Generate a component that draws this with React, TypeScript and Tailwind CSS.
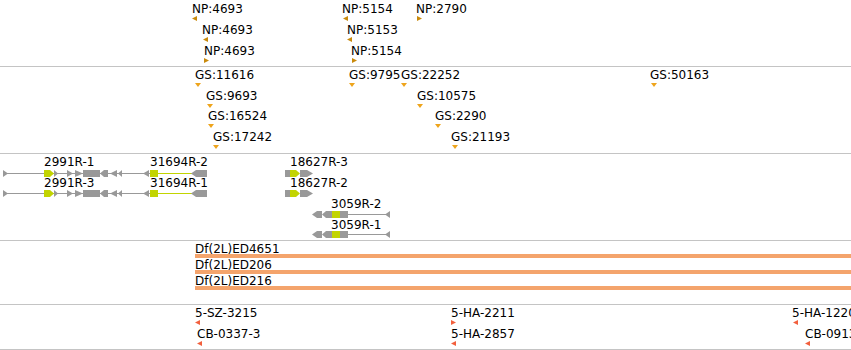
import React from "react";

const txt =
  "absolute whitespace-nowrap font-['DejaVu_Sans',sans-serif] text-[12px] leading-[14px] text-black";

type Dir = "l" | "r" | "d";

function Mk({ c, d, color }: { c: string; d: Dir; color: string }) {
  const w = d === "d" ? 6 : 5;
  const h = d === "d" ? 4 : 5;
  const pts = d === "l" ? "5,0 0,2.5 5,5" : d === "r" ? "0,0 5,2.5 0,5" : "0,0 6,0 3,4";
  return (
    <svg className={"absolute " + c} width={w} height={h} viewBox={`0 0 ${w} ${h}`}>
      <polygon points={pts} fill={color} />
    </svg>
  );
}

type Item = { t: string; tc: string; mc: string; d: Dir };

const np: Item[] = [
  { t: "NP:4693", tc: "left-[192px] top-[2px]", mc: "left-[192px] top-[16px]", d: "l" },
  { t: "NP:4693", tc: "left-[202px] top-[23px]", mc: "left-[203px] top-[37px]", d: "l" },
  { t: "NP:4693", tc: "left-[204px] top-[44px]", mc: "left-[204px] top-[58px]", d: "r" },
  { t: "NP:5154", tc: "left-[342px] top-[2px]", mc: "left-[343px] top-[16px]", d: "l" },
  { t: "NP:5153", tc: "left-[347px] top-[23px]", mc: "left-[347px] top-[37px]", d: "l" },
  { t: "NP:5154", tc: "left-[351px] top-[44px]", mc: "left-[352px] top-[58px]", d: "r" },
  { t: "NP:2790", tc: "left-[416px] top-[2px]", mc: "left-[417px] top-[16px]", d: "r" },
];

const gs: Item[] = [
  { t: "GS:11616", tc: "left-[195px] top-[1px]", mc: "left-[195px] top-[16px]", d: "d" },
  { t: "GS:9693", tc: "left-[206px] top-[22px]", mc: "left-[207px] top-[37px]", d: "d" },
  { t: "GS:16524", tc: "left-[208px] top-[42px]", mc: "left-[208px] top-[57px]", d: "d" },
  { t: "GS:17242", tc: "left-[213px] top-[63px]", mc: "left-[213px] top-[78px]", d: "d" },
  { t: "GS:9795", tc: "left-[349px] top-[1px]", mc: "left-[349px] top-[16px]", d: "d" },
  { t: "GS:22252", tc: "left-[401px] top-[1px]", mc: "left-[401px] top-[16px]", d: "d" },
  { t: "GS:10575", tc: "left-[417px] top-[22px]", mc: "left-[417px] top-[37px]", d: "d" },
  { t: "GS:2290", tc: "left-[435px] top-[42px]", mc: "left-[435px] top-[57px]", d: "d" },
  { t: "GS:21193", tc: "left-[451px] top-[63px]", mc: "left-[452px] top-[78px]", d: "d" },
  { t: "GS:50163", tc: "left-[650px] top-[1px]", mc: "left-[651px] top-[16px]", d: "d" },
];

const ins: Item[] = [
  { t: "5-SZ-3215", tc: "left-[195px] top-[1px]", mc: "left-[195px] top-[15px]", d: "l" },
  { t: "CB-0337-3", tc: "left-[197px] top-[22px]", mc: "left-[197px] top-[36px]", d: "l" },
  { t: "5-HA-2211", tc: "left-[451px] top-[1px]", mc: "left-[451px] top-[15px]", d: "r" },
  { t: "5-HA-2857", tc: "left-[451px] top-[22px]", mc: "left-[451px] top-[36px]", d: "l" },
  { t: "5-HA-1220", tc: "left-[792px] top-[1px]", mc: "left-[793px] top-[15px]", d: "l" },
  { t: "CB-0913-1", tc: "left-[805px] top-[22px]", mc: "left-[805px] top-[36px]", d: "l" },
];

const labels = [
  { t: "2991R-1", c: "left-[44px] top-[1px]" },
  { t: "2991R-3", c: "left-[44px] top-[22px]" },
  { t: "31694R-2", c: "left-[150px] top-[1px]" },
  { t: "31694R-1", c: "left-[150px] top-[22px]" },
  { t: "18627R-3", c: "left-[290px] top-[1px]" },
  { t: "18627R-2", c: "left-[290px] top-[22px]" },
  { t: "3059R-2", c: "left-[331px] top-[43px]" },
  { t: "3059R-1", c: "left-[331px] top-[64px]" },
];

const dfs = ["Df(2L)ED4651", "Df(2L)ED206", "Df(2L)ED216"];

const G = "#999999";
const Y = "#c2d400";

function Box(x0: number, x1: number, c: number, f: string) {
  return <rect x={x0} y={c - 3} width={x1 - x0} height={7} fill={f} />;
}
function Ln(x0: number, x1: number, c: number, f: string) {
  return <rect x={x0} y={c} width={x1 - x0} height={1} fill={f} />;
}
function TR(x0: number, x1: number, c: number, f: string) {
  return <polygon points={`${x0},${c - 3} ${x1},${c + 0.5} ${x0},${c + 4}`} fill={f} />;
}
function TL(x0: number, x1: number, c: number, f: string) {
  return <polygon points={`${x1},${c - 3} ${x0},${c + 0.5} ${x1},${c + 4}`} fill={f} />;
}
function PR(x0: number, xb: number, x1: number, c: number, f: string) {
  return (
    <polygon
      points={`${x0},${c - 3} ${xb},${c - 3} ${x1},${c + 0.5} ${xb},${c + 4} ${x0},${c + 4}`}
      fill={f}
    />
  );
}
function PL(x0: number, xb: number, x1: number, c: number, f: string) {
  return (
    <polygon
      points={`${x0},${c + 0.5} ${xb},${c - 3} ${x1},${c - 3} ${x1},${c + 4} ${xb},${c + 4}`}
      fill={f}
    />
  );
}

function GeneRowA({ c }: { c: number }) {
  return (
    <g>
      {Ln(4, 150, c, G)}
      {Ln(158, 192, c, Y)}
      {TR(3, 8, c, G)}
      {PR(44, 50, 54, c, Y)}
      {TR(54, 58, c, G)}
      {TR(67, 73, c, G)}
      {TR(75, 83, c, G)}
      {Box(83, 100, c, G)}
      {PL(100, 104, 108, c, G)}
      {TL(110, 117, c, G)}
      {TL(118, 122, c, G)}
      {TL(143, 149, c, G)}
      {Box(150, 158, c, Y)}
      {PL(191, 196, 207, c, G)}
      {Box(285, 290, c, G)}
      {PR(290, 296, 300, c, Y)}
      {PR(300, 307, 313, c, G)}
    </g>
  );
}

function GeneRowB({ c }: { c: number }) {
  return (
    <g>
      {Ln(348, 389, c, G)}
      {PL(312, 317, 322, c, G)}
      {PL(322, 326, 332, c, G)}
      {Box(332, 340, c, Y)}
      {Box(340, 348, c, G)}
      {TL(385, 390, c, G)}
    </g>
  );
}

export default function App() {
  const track = "relative border-b border-[#c4c4c4] overflow-hidden shrink-0";
  return (
    <div className="w-[851px] h-[350px] overflow-hidden bg-white flex flex-col">
      <div className={track + " h-[67px]"}>
        {np.map((i, k) => (
          <React.Fragment key={k}>
            <span className={txt + " " + i.tc}>{i.t}</span>
            <Mk c={i.mc} d={i.d} color="#c98a0c" />
          </React.Fragment>
        ))}
      </div>
      <div className={track + " h-[87px]"}>
        {gs.map((i, k) => (
          <React.Fragment key={k}>
            <span className={txt + " " + i.tc}>{i.t}</span>
            <Mk c={i.mc} d={i.d} color="#eea41c" />
          </React.Fragment>
        ))}
      </div>
      <div className={track + " h-[87px]"}>
        <svg className="absolute left-0 top-0" width={851} height={86} viewBox="0 0 851 86">
          <GeneRowA c={19} />
          <GeneRowA c={39} />
          <GeneRowB c={60} />
          <GeneRowB c={80} />
        </svg>
        {labels.map((l, k) => (
          <span key={k} className={txt + " " + l.c}>
            {l.t}
          </span>
        ))}
      </div>
      <div className={track + " h-[64px] pl-[195px] pt-[4px] flex flex-col gap-[3px]"}>
        {dfs.map((d) => (
          <div key={d} className="flex flex-col">
            <span className="block whitespace-nowrap font-['DejaVu_Sans',sans-serif] text-[12px] leading-[9px] text-black">
              {d}
            </span>
            <div className="h-[4px] bg-[#f4a46c]" />
          </div>
        ))}
      </div>
      <div className={track + " h-[45px]"}>
        {ins.map((i, k) => (
          <React.Fragment key={k}>
            <span className={txt + " " + i.tc}>{i.t}</span>
            <Mk c={i.mc} d={i.d} color="#f2603e" />
          </React.Fragment>
        ))}
      </div>
    </div>
  );
}
